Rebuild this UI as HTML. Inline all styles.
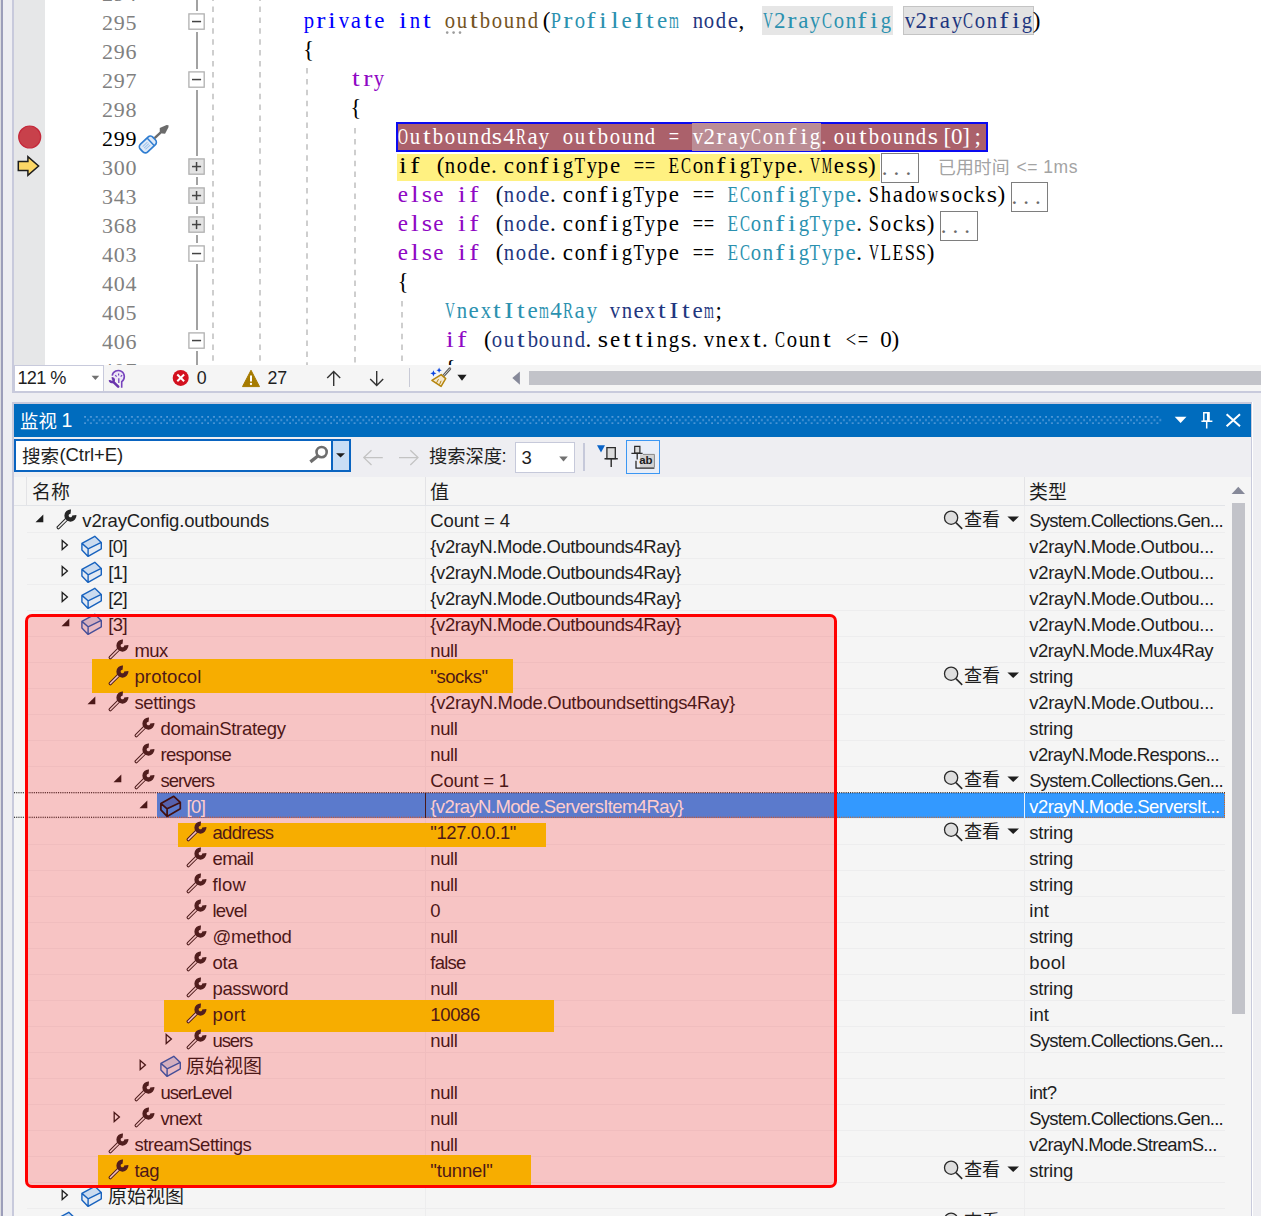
<!DOCTYPE html>
<html><head><meta charset="utf-8"><title>Watch</title><style>
html,body{margin:0;padding:0}
body{width:1261px;height:1216px;overflow:hidden;position:relative;background:#fff;font-family:"Liberation Sans",sans-serif}
#root{position:absolute;left:0;top:0;width:1261px;height:1216px;overflow:hidden}
#root div,#root svg{position:absolute;display:block}
#root span{position:static}
.ui{font-family:"Liberation Sans",sans-serif;white-space:pre}
.t{font-size:18.500px;line-height:26px;height:26px;margin-top:1.300px}
.cl{font-family:"Liberation Serif",serif;font-size:23px;line-height:29px;height:29px;white-space:pre;margin-top:-1.300px}
.ln{font-family:"Liberation Serif",serif;font-size:22px;line-height:29px;height:29px;left:101.600px;white-space:pre;margin-top:1.100px}
#root .sc i{position:static}
.sc i{display:inline-flex;justify-content:center;width:11.79px;font-style:normal;white-space:pre}.q10{transform:scaleX(0.50)}.q11{transform:scaleX(0.55)}.q12{transform:scaleX(0.60)}.q13{transform:scaleX(0.65)}.q14{transform:scaleX(0.70)}.q15{transform:scaleX(0.75)}.q16{transform:scaleX(0.80)}.q17{transform:scaleX(0.85)}.q18{transform:scaleX(0.90)}.q19{transform:scaleX(0.95)}.q21{transform:scaleX(1.05)}.q22{transform:scaleX(1.10)}.q23{transform:scaleX(1.15)}.q24{transform:scaleX(1.20)}.q25{transform:scaleX(1.25)}.q26{transform:scaleX(1.30)}.q27{transform:scaleX(1.35)}.pl{transform:translateX(-3.2px)}.pm{transform:translateX(-2.4px)}.pr{transform:translateX(2.4px)}
.cj{overflow:visible;font-family:"Liberation Sans","Noto Sans CJK SC",sans-serif}</style></head><body><div id="root">
<div style="left:0px;top:0px;width:1px;height:1216px;background:#dcdce0;"></div>
<div style="left:1px;top:0px;width:1.9px;height:1216px;background:#9c9eba;"></div>
<div style="left:2.9px;top:0px;width:9.4px;height:1216px;background:#eeeef2;"></div>
<div style="left:12.3px;top:0px;width:1.5px;height:392.5px;background:#c8cadc;"></div>
<div style="left:13.8px;top:364.8px;width:1248px;height:26.3px;background:#f5f5f5;"></div>
<div style="left:12.3px;top:391px;width:1249px;height:1.5px;background:#c8cadc;"></div>
<div style="left:2.9px;top:392.5px;width:1259px;height:9.5px;background:#eeeef2;"></div>
<div id="ed" style="left:0;top:0;width:1261px;height:364.8px;overflow:hidden">
<div style="left:13.8px;top:0px;width:30.9px;height:365px;background:#e6e7e8;"></div>
<div style="left:762.23px;top:6px;width:130.29px;height:28.6px;background:#e6e6e6;"></div>
<div style="left:903.01px;top:6px;width:131.19px;height:28.6px;background:#e2e2e2;box-sizing:border-box;border:1px solid #c4c4c4"></div>
<div style="left:395.64px;top:122px;width:592.1px;height:30px;background:#ab616b;box-sizing:border-box;border:2px solid #0a0af0"></div>
<div style="left:691.79px;top:123.3px;width:129.69px;height:27.4px;background:#bb8d95;"></div>
<div style="left:396.64px;top:153.5px;width:483.79px;height:27px;background:#fff181;"></div>
<svg style="left:211.1px;top:0px" width="4" height="365"><line x1="2" y1="-4.4" x2="2" y2="400" stroke="#c6c6c6" stroke-width="1.7" stroke-dasharray="5.5 5.4"/></svg>
<svg style="left:258.2px;top:0px" width="4" height="365"><line x1="2" y1="-4.4" x2="2" y2="400" stroke="#c6c6c6" stroke-width="1.7" stroke-dasharray="5.5 5.4"/></svg>
<svg style="left:305.3px;top:68.4px" width="4" height="296.6"><line x1="2" y1="0" x2="2" y2="400" stroke="#c6c6c6" stroke-width="1.7" stroke-dasharray="5.5 5.4"/></svg>
<svg style="left:352.6px;top:127.6px" width="4" height="237.4"><line x1="2" y1="0" x2="2" y2="400" stroke="#c6c6c6" stroke-width="1.7" stroke-dasharray="5.5 5.4"/></svg>
<svg style="left:399.9px;top:301px" width="4" height="64"><line x1="2" y1="0" x2="2" y2="400" stroke="#c6c6c6" stroke-width="1.7" stroke-dasharray="5.5 5.4"/></svg>
<div style="left:196.2px;top:0px;width:1.6px;height:365px;background:#a2a2a2;"></div>
<svg style="left:185.9px;top:11.3px" width="21" height="21" viewBox="-2.3 -2.3 21 21"><rect x="-2.3" y="-2.3" width="21" height="21" fill="#fff"/><rect x="0.6" y="0.6" width="15.3" height="15.3" fill="#fff" stroke="#b0b0b0" stroke-width="1.3"/><path d="M3.7 8.25h9.1" stroke="#444" stroke-width="1.5"/></svg>
<svg style="left:185.9px;top:69.3px" width="21" height="21" viewBox="-2.3 -2.3 21 21"><rect x="-2.3" y="-2.3" width="21" height="21" fill="#fff"/><rect x="0.6" y="0.6" width="15.3" height="15.3" fill="#fff" stroke="#b0b0b0" stroke-width="1.3"/><path d="M3.7 8.25h9.1" stroke="#444" stroke-width="1.5"/></svg>
<svg style="left:185.9px;top:156.3px" width="21" height="21" viewBox="-2.3 -2.3 21 21"><rect x="-2.3" y="-2.3" width="21" height="21" fill="#fff"/><rect x="0.6" y="0.6" width="15.3" height="15.3" fill="#e3e3e3" stroke="#b0b0b0" stroke-width="1.3"/><path d="M3.7 8.25h9.1" stroke="#444" stroke-width="1.5"/><path d="M8.25 3.7v9.1" stroke="#444" stroke-width="1.5"/></svg>
<svg style="left:185.9px;top:185.3px" width="21" height="21" viewBox="-2.3 -2.3 21 21"><rect x="-2.3" y="-2.3" width="21" height="21" fill="#fff"/><rect x="0.6" y="0.6" width="15.3" height="15.3" fill="#e3e3e3" stroke="#b0b0b0" stroke-width="1.3"/><path d="M3.7 8.25h9.1" stroke="#444" stroke-width="1.5"/><path d="M8.25 3.7v9.1" stroke="#444" stroke-width="1.5"/></svg>
<svg style="left:185.9px;top:214.3px" width="21" height="21" viewBox="-2.3 -2.3 21 21"><rect x="-2.3" y="-2.3" width="21" height="21" fill="#fff"/><rect x="0.6" y="0.6" width="15.3" height="15.3" fill="#e3e3e3" stroke="#b0b0b0" stroke-width="1.3"/><path d="M3.7 8.25h9.1" stroke="#444" stroke-width="1.5"/><path d="M8.25 3.7v9.1" stroke="#444" stroke-width="1.5"/></svg>
<svg style="left:185.9px;top:243.3px" width="21" height="21" viewBox="-2.3 -2.3 21 21"><rect x="-2.3" y="-2.3" width="21" height="21" fill="#fff"/><rect x="0.6" y="0.6" width="15.3" height="15.3" fill="#fff" stroke="#b0b0b0" stroke-width="1.3"/><path d="M3.7 8.25h9.1" stroke="#444" stroke-width="1.5"/></svg>
<svg style="left:185.9px;top:330.3px" width="21" height="21" viewBox="-2.3 -2.3 21 21"><rect x="-2.3" y="-2.3" width="21" height="21" fill="#fff"/><rect x="0.6" y="0.6" width="15.3" height="15.3" fill="#fff" stroke="#b0b0b0" stroke-width="1.3"/><path d="M3.7 8.25h9.1" stroke="#444" stroke-width="1.5"/></svg>
<div class="ln sc" style="top:-22px;color:#808080"><i>2</i><i>9</i><i>4</i></div>
<div class="ln sc" style="top:7px;color:#808080"><i>2</i><i>9</i><i>5</i></div>
<div class="ln sc" style="top:36px;color:#808080"><i>2</i><i>9</i><i>6</i></div>
<div class="ln sc" style="top:65px;color:#808080"><i>2</i><i>9</i><i>7</i></div>
<div class="ln sc" style="top:94px;color:#808080"><i>2</i><i>9</i><i>8</i></div>
<div class="ln sc" style="top:123px;color:#000"><i>2</i><i>9</i><i>9</i></div>
<div class="ln sc" style="top:152px;color:#808080"><i>3</i><i>0</i><i>0</i></div>
<div class="ln sc" style="top:181px;color:#808080"><i>3</i><i>4</i><i>3</i></div>
<div class="ln sc" style="top:210px;color:#808080"><i>3</i><i>6</i><i>8</i></div>
<div class="ln sc" style="top:239px;color:#808080"><i>4</i><i>0</i><i>3</i></div>
<div class="ln sc" style="top:268px;color:#808080"><i>4</i><i>0</i><i>4</i></div>
<div class="ln sc" style="top:297px;color:#808080"><i>4</i><i>0</i><i>5</i></div>
<div class="ln sc" style="top:326px;color:#808080"><i>4</i><i>0</i><i>6</i></div>
<div class="ln sc" style="top:355px;color:#808080"><i>4</i><i>0</i><i>7</i></div>
<div class="cl sc" style="left:302.72px;top:7px"><span style="color:#0000ff"><i class="q18">p</i><i class="q24">r</i><i class="q24">i</i><i class="q18">v</i><i>a</i><i class="q24">t</i><i>e</i><i> </i><i class="q24">i</i><i class="q18">n</i><i class="q24">t</i><i> </i></span><span style="color:#74531f"><i class="q18">o</i><i class="q18">u</i><i class="q24">t</i><i class="q18">b</i><i class="q18">o</i><i class="q18">u</i><i class="q18">n</i><i class="q18">d</i></span><span style="color:#000"><i class="pr">(</i></span><span style="color:#2b91af"><i class="q16">P</i><i class="q24">r</i><i class="q18">o</i><i class="q24">f</i><i class="q24">i</i><i class="q24">l</i><i>e</i><i class="q24">I</i><i class="q24">t</i><i>e</i><i class="q11">m</i></span><span style="color:#000"><i> </i></span><span style="color:#1f377f"><i class="q18">n</i><i class="q18">o</i><i class="q18">d</i><i>e</i></span><span style="color:#000"><i class="pl">,</i><i> </i></span><span style="color:#2b91af"><i class="q12">V</i><i>2</i><i class="q24">r</i><i>a</i><i class="q18">y</i><i class="q13">C</i><i class="q18">o</i><i class="q18">n</i><i class="q24">f</i><i class="q24">i</i><i class="q18">g</i></span><span style="color:#000"><i> </i></span><span style="color:#1f377f"><i class="q18">v</i><i>2</i><i class="q24">r</i><i>a</i><i class="q18">y</i><i class="q13">C</i><i class="q18">o</i><i class="q18">n</i><i class="q24">f</i><i class="q24">i</i><i class="q18">g</i></span><span style="color:#000"><i class="pm">)</i></span></div>
<div class="cl sc" style="left:302.72px;top:36px"><span style="color:#000"><i>{</i></span></div>
<div class="cl sc" style="left:349.88px;top:65px"><span style="color:#8f08c4"><i class="q24">t</i><i class="q24">r</i><i class="q18">y</i></span></div>
<div class="cl sc" style="left:349.88px;top:94px"><span style="color:#000"><i>{</i></span></div>
<div class="cl sc" style="left:397.04px;top:123px"><span style="color:#fff"><i class="q12">O</i><i class="q18">u</i><i class="q24">t</i><i class="q18">b</i><i class="q18">o</i><i class="q18">u</i><i class="q18">n</i><i class="q18">d</i><i class="q23">s</i><i>4</i><i class="q13">R</i><i>a</i><i class="q18">y</i><i> </i><i class="q18">o</i><i class="q18">u</i><i class="q24">t</i><i class="q18">b</i><i class="q18">o</i><i class="q18">u</i><i class="q18">n</i><i class="q18">d</i><i> </i><i class="q16">=</i><i> </i><i class="q18">v</i><i>2</i><i class="q24">r</i><i>a</i><i class="q18">y</i><i class="q13">C</i><i class="q18">o</i><i class="q18">n</i><i class="q24">f</i><i class="q24">i</i><i class="q18">g</i><i class="pl">.</i><i class="q18">o</i><i class="q18">u</i><i class="q24">t</i><i class="q18">b</i><i class="q18">o</i><i class="q18">u</i><i class="q18">n</i><i class="q18">d</i><i class="q23">s</i><i class="pr">[</i><i>0</i><i class="pm">]</i><i class="pm">;</i></span></div>
<div class="cl sc" style="left:397.04px;top:152px"><span style="color:#000"><i class="q24">i</i><i class="q24">f</i><i> </i><i class="pr">(</i><i class="q18">n</i><i class="q18">o</i><i class="q18">d</i><i>e</i><i class="pl">.</i><i>c</i><i class="q18">o</i><i class="q18">n</i><i class="q24">f</i><i class="q24">i</i><i class="q18">g</i><i class="q15">T</i><i class="q18">y</i><i class="q18">p</i><i>e</i><i> </i><i class="q16">=</i><i class="q16">=</i><i> </i><i class="q15">E</i><i class="q13">C</i><i class="q18">o</i><i class="q18">n</i><i class="q24">f</i><i class="q24">i</i><i class="q18">g</i><i class="q15">T</i><i class="q18">y</i><i class="q18">p</i><i>e</i><i class="pl">.</i><i class="q12">V</i><i class="q10">M</i><i>e</i><i class="q23">s</i><i class="q23">s</i><i class="pm">)</i></span></div>
<div class="cl sc" style="left:397.04px;top:181px"><span style="color:#8f08c4"><i>e</i><i class="q24">l</i><i class="q23">s</i><i>e</i><i> </i><i class="q24">i</i><i class="q24">f</i></span><span style="color:#000"><i> </i><i class="pr">(</i></span><span style="color:#1f377f"><i class="q18">n</i><i class="q18">o</i><i class="q18">d</i><i>e</i></span><span style="color:#000"><i class="pl">.</i><i>c</i><i class="q18">o</i><i class="q18">n</i><i class="q24">f</i><i class="q24">i</i><i class="q18">g</i><i class="q15">T</i><i class="q18">y</i><i class="q18">p</i><i>e</i><i> </i><i class="q16">=</i><i class="q16">=</i><i> </i></span><span style="color:#2b91af"><i class="q15">E</i><i class="q13">C</i><i class="q18">o</i><i class="q18">n</i><i class="q24">f</i><i class="q24">i</i><i class="q18">g</i><i class="q15">T</i><i class="q18">y</i><i class="q18">p</i><i>e</i></span><span style="color:#000"><i class="pl">.</i><i class="q16">S</i><i class="q18">h</i><i>a</i><i class="q18">d</i><i class="q18">o</i><i class="q12">w</i><i class="q23">s</i><i class="q18">o</i><i>c</i><i class="q18">k</i><i class="q23">s</i><i class="pm">)</i></span></div>
<div class="cl sc" style="left:397.04px;top:210px"><span style="color:#8f08c4"><i>e</i><i class="q24">l</i><i class="q23">s</i><i>e</i><i> </i><i class="q24">i</i><i class="q24">f</i></span><span style="color:#000"><i> </i><i class="pr">(</i></span><span style="color:#1f377f"><i class="q18">n</i><i class="q18">o</i><i class="q18">d</i><i>e</i></span><span style="color:#000"><i class="pl">.</i><i>c</i><i class="q18">o</i><i class="q18">n</i><i class="q24">f</i><i class="q24">i</i><i class="q18">g</i><i class="q15">T</i><i class="q18">y</i><i class="q18">p</i><i>e</i><i> </i><i class="q16">=</i><i class="q16">=</i><i> </i></span><span style="color:#2b91af"><i class="q15">E</i><i class="q13">C</i><i class="q18">o</i><i class="q18">n</i><i class="q24">f</i><i class="q24">i</i><i class="q18">g</i><i class="q15">T</i><i class="q18">y</i><i class="q18">p</i><i>e</i></span><span style="color:#000"><i class="pl">.</i><i class="q16">S</i><i class="q18">o</i><i>c</i><i class="q18">k</i><i class="q23">s</i><i class="pm">)</i></span></div>
<div class="cl sc" style="left:397.04px;top:239px"><span style="color:#8f08c4"><i>e</i><i class="q24">l</i><i class="q23">s</i><i>e</i><i> </i><i class="q24">i</i><i class="q24">f</i></span><span style="color:#000"><i> </i><i class="pr">(</i></span><span style="color:#1f377f"><i class="q18">n</i><i class="q18">o</i><i class="q18">d</i><i>e</i></span><span style="color:#000"><i class="pl">.</i><i>c</i><i class="q18">o</i><i class="q18">n</i><i class="q24">f</i><i class="q24">i</i><i class="q18">g</i><i class="q15">T</i><i class="q18">y</i><i class="q18">p</i><i>e</i><i> </i><i class="q16">=</i><i class="q16">=</i><i> </i></span><span style="color:#2b91af"><i class="q15">E</i><i class="q13">C</i><i class="q18">o</i><i class="q18">n</i><i class="q24">f</i><i class="q24">i</i><i class="q18">g</i><i class="q15">T</i><i class="q18">y</i><i class="q18">p</i><i>e</i></span><span style="color:#000"><i class="pl">.</i><i class="q12">V</i><i class="q15">L</i><i class="q15">E</i><i class="q16">S</i><i class="q16">S</i><i class="pm">)</i></span></div>
<div class="cl sc" style="left:397.04px;top:268px"><span style="color:#000"><i>{</i></span></div>
<div class="cl sc" style="left:444.2px;top:297px"><span style="color:#2b91af"><i class="q12">V</i><i class="q18">n</i><i>e</i><i class="q18">x</i><i class="q24">t</i><i class="q24">I</i><i class="q24">t</i><i>e</i><i class="q11">m</i><i>4</i><i class="q13">R</i><i>a</i><i class="q18">y</i></span><span style="color:#000"><i> </i></span><span style="color:#1f377f"><i class="q18">v</i><i class="q18">n</i><i>e</i><i class="q18">x</i><i class="q24">t</i><i class="q24">I</i><i class="q24">t</i><i>e</i><i class="q11">m</i></span><span style="color:#000"><i class="pm">;</i></span></div>
<div class="cl sc" style="left:444.2px;top:326px"><span style="color:#8f08c4"><i class="q24">i</i><i class="q24">f</i></span><span style="color:#000"><i> </i><i class="pr">(</i></span><span style="color:#1f377f"><i class="q18">o</i><i class="q18">u</i><i class="q24">t</i><i class="q18">b</i><i class="q18">o</i><i class="q18">u</i><i class="q18">n</i><i class="q18">d</i></span><span style="color:#000"><i class="pl">.</i><i class="q23">s</i><i>e</i><i class="q24">t</i><i class="q24">t</i><i class="q24">i</i><i class="q18">n</i><i class="q18">g</i><i class="q23">s</i><i class="pl">.</i><i class="q18">v</i><i class="q18">n</i><i>e</i><i class="q18">x</i><i class="q24">t</i><i class="pl">.</i><i class="q13">C</i><i class="q18">o</i><i class="q18">u</i><i class="q18">n</i><i class="q24">t</i><i> </i><i class="q16">&lt;</i><i class="q16">=</i><i> </i><i>0</i><i class="pm">)</i></span></div>
<div class="cl sc" style="left:444.2px;top:355px"><span style="color:#000"><i>{</i></span></div>
<svg style="left:445.2px;top:30.8px" width="20" height="4"><circle cx="2.2" cy="1.6" r="1.3" fill="#9c9c9c"/><circle cx="8.6" cy="1.6" r="1.3" fill="#9c9c9c"/><circle cx="15" cy="1.6" r="1.3" fill="#9c9c9c"/></svg>
<div class="cl" style="left:880.83px;top:154.6px;width:37.77px;height:29.3px;box-sizing:border-box;border:1.6px solid #7e7e7e;background:#fff;color:#6a6a6a"><span class="sc" style="position:relative;left:0.2px;top:-1.2px"><i class="pl">.</i><i class="pl">.</i><i class="pl">.</i></span></div>
<div class="cl" style="left:1010.52px;top:183.6px;width:37.77px;height:29.3px;box-sizing:border-box;border:1.6px solid #7e7e7e;background:#fff;color:#6a6a6a"><span class="sc" style="position:relative;left:0.2px;top:-1.2px"><i class="pl">.</i><i class="pl">.</i><i class="pl">.</i></span></div>
<div class="cl" style="left:939.78px;top:212.6px;width:37.77px;height:29.3px;box-sizing:border-box;border:1.6px solid #7e7e7e;background:#fff;color:#6a6a6a"><span class="sc" style="position:relative;left:0.2px;top:-1.2px"><i class="pl">.</i><i class="pl">.</i><i class="pl">.</i></span></div>
<svg class="cj" style="left:938.3px;top:158.2px" width="71.9" height="18.2"><text x="0" y="16" font-size="17.9" fill="#a3a3a3">已用时间</text></svg>
<div class="ui" style="left:1016.5px;top:157.3px;font-size:17.5px;color:#a3a3a3;letter-spacing:0.521px">&lt;= 1ms</div>
<svg style="left:17px;top:124px" width="26" height="26"><circle cx="12.7" cy="13" r="11" fill="#c8414b" stroke="#c5283a" stroke-width="1.2"/></svg>
<svg style="left:16px;top:154px" width="26" height="24" viewBox="0 0 26 24"><path d="M2.3 7.6h9.6V2.6l10.7 9.4-10.7 9.4v-5H2.3z" fill="#fcd766" stroke="#1e1e1e" stroke-width="1.5" stroke-linejoin="miter"/></svg>
<svg style="left:136px;top:122px" width="34" height="33" viewBox="136 122 34 33"><g transform="rotate(-43 148 144.2)"><rect x="139" y="139" width="17.4" height="10.6" rx="3.6" fill="#dfeaf8" stroke="#2f7dd1" stroke-width="1.7"/><path d="M151.6 139.3v10" stroke="#2f7dd1" stroke-width="1.5"/><path d="M142.5 142.3h6.5M142.5 144.3h6.5M142.5 146.3h6.5" stroke="#9cc2ec" stroke-width="1"/><path d="M157 144.3h8" stroke="#6b6b6b" stroke-width="2.4"/><path d="M164 144.3l3.6-3.9 7 2.5 1.3 1.4-1.3 1.4-7 2.5z" fill="#6b6b6b"/></g></svg>
</div>
<div style="left:13.8px;top:364.8px;width:90px;height:27.7px;background:#fff;box-sizing:border-box;border:1.4px solid #c8cadc"></div>
<div class="ui" style="left:17.4px;top:364.8px;font-size:18.2px;line-height:26px;color:#1e1e1e;letter-spacing:-0.656px">121 %</div>
<svg style="left:91px;top:375px" width="9" height="6"><path d="M0.6 0.8h7.6l-3.8 4.2z" fill="#717171"/></svg>
<svg style="left:107px;top:367px" width="21" height="23" viewBox="107 367 21 23"><circle cx="119" cy="375.4" r="5.6" fill="#ece6f6"/><path d="M112.2 375.6A6.1 6.1 0 1 1 121.700 381.600V387.800" fill="none" stroke="#7642bd" stroke-width="1.600"/><path d="M115.300 375.100l1.300 1.500M118.600 373.600v1.900M122.100 375.100l-1.400 1.500" stroke="#7642bd" stroke-width="1.200"/><path d="M118.800 378.200v4.900" stroke="#7642bd" stroke-width="1.300"/><path d="M111.730 378.310A1.900 1.900 0 1 1 110 380.030" fill="none" stroke="#6a35ac" stroke-width="2.500"/><path d="M113.300 381.800l4.900 4.900" stroke="#6a35ac" stroke-width="2.600" stroke-linecap="round"/></svg>
<svg style="left:172px;top:369px" width="18" height="18" viewBox="0 0 18 18"><circle cx="8.7" cy="8.9" r="8" fill="#d3111f"/><path d="M5.300 5.500l6.800 6.800M12.100 5.500l-6.800 6.800" stroke="#fff" stroke-width="2"/></svg>
<div class="ui" style="left:196.7px;top:364.800px;font-size:17.8px;line-height:26px;color:#1e1e1e">0</div>
<svg style="left:241px;top:369px" width="20" height="19" viewBox="0 0 20 19"><path d="M10 1.200l8.500 16.400h-17z" fill="#a67b00" stroke="#a67b00" stroke-width="1" stroke-linejoin="round"/><path d="M10 6.500v6" stroke="#fff" stroke-width="2"/><circle cx="10" cy="15" r="1.150" fill="#fff"/></svg>
<div class="ui" style="left:267.6px;top:364.800px;font-size:17.8px;line-height:26px;color:#1e1e1e;letter-spacing:-0.191px">27</div>
<svg style="left:325px;top:369px" width="18" height="19" viewBox="0 0 18 19"><path d="M8.700 17V2.800M2.200 9l6.500-6.500 6.500 6.500" fill="none" stroke="#333" stroke-width="1.400"/></svg>
<svg style="left:368.400px;top:369px" width="18" height="19" viewBox="0 0 18 19"><path d="M8.700 2v14.200M2.200 10l6.500 6.500 6.500-6.500" fill="none" stroke="#333" stroke-width="1.400"/></svg>
<div style="left:408.8px;top:367.7px;width:1.4px;height:19.7px;background:#c8cad6;"></div>
<svg style="left:430px;top:366px" width="23" height="23" viewBox="430 366 23 23"><path d="M442.800 376.600l7-7.800" stroke="#5c5c5c" stroke-width="2.800" stroke-linecap="round"/><path d="M442.800 376.600l7-7.800" stroke="#cfcfcf" stroke-width="1" stroke-linecap="round"/><path d="M441.200 374.600l4.500 4-4.600 7.800-9.200-6z" fill="#f4e7cf" stroke="#b5850d" stroke-width="1.500" stroke-linejoin="round"/><path d="M436.500 382.800l2-3.600M439.500 384.600l1.600-3.800" stroke="#b5850d" stroke-width="1"/><path d="M433.400 370.200l.9 2.200 2.200.9-2.200.9-.9 2.200-.9-2.200-2.200-.9 2.200-.9zM439.100 367.600l.8 1.900 1.900.8-1.900.8-.8 1.900-.8-1.900-1.900-.8 1.900-.8z" fill="#0b45e0"/></svg>
<svg style="left:457px;top:374px" width="10" height="7"><path d="M0.400 0.700h9.200l-4.600 6.100z" fill="#1e1e1e"/></svg>
<svg style="left:512px;top:371px" width="9" height="14"><path d="M7.900 0.500v13.300L0.300 7.100z" fill="#868999"/></svg>
<div style="left:529.2px;top:371.1px;width:740px;height:13.7px;background:#c2c3c9;"></div>
<div style="left:12.3px;top:402px;width:1240.2px;height:820px;background:#c8cadc;"></div>
<div style="left:13.8px;top:403.8px;width:1237.2px;height:820px;background:#f5f5f5;"></div>
<div style="left:1252.5px;top:402px;width:10px;height:820px;background:#eeeef2;"></div>
<div style="left:13.8px;top:403.8px;width:1237.2px;height:32.8px;background:#006cbe;"></div>
<svg class="cj" style="left:20px;top:411px" width="37.8" height="19.4"><text x="0" y="17" font-size="18.4" fill="#fff">监视</text></svg>
<div class="ui" style="left:61.6px;top:407.400px;font-size:19.5px;line-height:26px;color:#fff">1</div>
<svg style="left:84px;top:415.800px" width="1078.400" height="8.200"><defs><pattern id="grip" width="5.860" height="6.400" patternUnits="userSpaceOnUse"><rect x="0.200" y="0" width="1.700" height="1.700" fill="#5d9fdb"/><rect x="3.100" y="3.200" width="1.700" height="1.700" fill="#5d9fdb"/></pattern></defs><rect width="1078.400" height="8.200" fill="url(#grip)"/></svg>
<svg style="left:1174px;top:416px" width="14" height="8"><path d="M0.700 0.700h11.800l-5.900 6.300z" fill="#fff"/></svg>
<svg style="left:1200px;top:411px" width="14" height="19" viewBox="0 0 14 19"><path d="M3.800 1.700h5.200v8.300h-5.200zM1.400 10.200h11M6.700 10.200v7.400" fill="none" stroke="#fff" stroke-width="1.500"/><path d="M8.100 1.700v8.300" stroke="#fff" stroke-width="2.200"/></svg>
<svg style="left:1225px;top:413px" width="17" height="15" viewBox="0 0 17 15"><path d="M1.600 1.300l13.400 12M15 1.300l-13.400 12" stroke="#fff" stroke-width="2"/></svg>
<div style="left:13.8px;top:436.6px;width:1237.2px;height:40px;background:#eeeef2;"></div>
<div style="left:14.2px;top:439.1px;width:336.6px;height:32.6px;background:#fff;box-sizing:border-box;border:2.200px solid #0a64c0"></div>
<div style="left:332.9px;top:440.9px;width:16.1px;height:29px;background:#c9def5;"></div>
<div style="left:331.1px;top:439.1px;width:1.8px;height:32.6px;background:#0a64c0;"></div>
<svg class="cj" style="left:21.8px;top:446.2px" width="37.6" height="19"><text x="0" y="16.7" font-size="18.6" fill="#1e1e1e">搜索</text></svg>
<div class="ui" style="left:59.500px;top:442.200px;font-size:18.5px;line-height:26px;color:#1e1e1e;letter-spacing:-0.094px">(Ctrl+E)</div>
<svg style="left:307px;top:444px" width="22" height="21" viewBox="307 444 22 21"><circle cx="321.600" cy="452.100" r="5.100" fill="none" stroke="#6e6e6e" stroke-width="2.600"/><path d="M317.800 456l-7.400 5.900" stroke="#6e6e6e" stroke-width="3.300"/></svg>
<svg style="left:336px;top:453px" width="10" height="5"><path d="M0.100 0.200h8.900l-4.450 4.200z" fill="#1e1e1e"/></svg>
<svg style="left:362px;top:449px" width="22" height="18" viewBox="0 0 22 18"><path d="M1.800 8.600h19M9.500 1.200L1.800 8.600l7.700 7.400" fill="none" stroke="#c3c3c3" stroke-width="1.300"/></svg>
<svg style="left:398px;top:449px" width="22" height="18" viewBox="0 0 22 18"><path d="M1 8.600h19M12.300 1.200L20 8.600l-7.700 7.400" fill="none" stroke="#c3c3c3" stroke-width="1.300"/></svg>
<svg class="cj" style="left:428.5px;top:447.3px" width="73.5" height="18.6"><text x="0" y="16.4" font-size="18.3" fill="#1e1e1e">搜索深度</text></svg>
<div class="ui" style="left:501.500px;top:443.400px;font-size:18.5px;line-height:26px;color:#1e1e1e">:</div>
<div style="left:515px;top:442px;width:60px;height:30.8px;background:#fff;box-sizing:border-box;border:1.600px solid #c6c9da"></div>
<div class="ui" style="left:521.500px;top:444.600px;font-size:18.5px;line-height:26px;color:#1e1e1e">3</div>
<svg style="left:559px;top:455.500px" width="10" height="6"><path d="M0.200 0.500h8.600l-4.300 5z" fill="#717171"/></svg>
<div style="left:583.4px;top:443px;width:1.7px;height:27.5px;background:#c6c9da;"></div>
<svg style="left:596px;top:444px" width="24" height="24" viewBox="596 444 24 24"><path d="M597 445.300h8l-4 7.100z" fill="#0a64c8"/><path d="M606.900 447.600h8.400v11h-8.400z" fill="#dcdcdc" stroke="#2b2b2b" stroke-width="1.300"/><path d="M604.500 458.800h13.300M611.200 458.800v8.200" stroke="#2b2b2b" stroke-width="1.400"/></svg>
<div style="left:625.9px;top:440.3px;width:34px;height:33.5px;background:#e9eef7;box-sizing:border-box;border:1.600px solid #3b97f3"></div>
<svg style="left:629px;top:443px" width="28" height="28" viewBox="629 443 28 28"><path d="M634.700 446.300h5.200v6.700h-5.200z" fill="#dcdcdc" stroke="#2b2b2b" stroke-width="1.200"/><path d="M631.400 453.400h11.200M637.200 453.400v6.200" stroke="#2b2b2b" stroke-width="1.300"/><rect x="640" y="454.300" width="14.400" height="13.800" fill="#d3d3d3"/><path d="M636 460.800v7.400h18.400" fill="none" stroke="#2b2b2b" stroke-width="1.300"/><path d="M643 454.400h11.400v13" fill="none" stroke="#8a8a8a" stroke-width="1"/></svg>
<div class="ui" style="left:639.300px;top:453.200px;font-size:11.500px;line-height:14px;font-weight:bold;color:#1e1e1e;letter-spacing:-0.3px">ab</div>
<div style="left:13.8px;top:505px;width:1211.2px;height:1px;background:#e2e4e8;"></div>
<div style="left:25.7px;top:476.6px;width:1px;height:28.6px;background:#e3e3e6;"></div>
<div style="left:424.5px;top:476.6px;width:1px;height:28.6px;background:#e3e3e6;"></div>
<div style="left:1023.8px;top:476.6px;width:1px;height:28.6px;background:#e3e3e6;"></div>
<svg class="cj" style="left:31.6px;top:482px" width="37.9" height="19"><text x="0" y="16.7" font-size="18.9" fill="#1e1e1e">名称</text></svg>
<svg class="cj" style="left:430.3px;top:482px" width="19" height="19"><text x="0" y="16.7" font-size="19" fill="#1e1e1e">值</text></svg>
<svg class="cj" style="left:1029.2px;top:482px" width="37.9" height="19"><text x="0" y="16.7" font-size="18.9" fill="#1e1e1e">类型</text></svg>
<svg style="left:1231px;top:486px" width="15" height="9"><path d="M0.600 8.100h13.400L7.300 0.700z" fill="#868999"/></svg>
<div style="left:1232.2px;top:502.8px;width:12.6px;height:511.5px;background:#c2c3c9;"></div>
<div style="left:26.7px;top:532.2px;width:1198.3px;height:1px;background:#ededee;"></div>
<div style="left:26.7px;top:558.2px;width:1198.3px;height:1px;background:#ededee;"></div>
<div style="left:26.7px;top:584.2px;width:1198.3px;height:1px;background:#ededee;"></div>
<div style="left:26.7px;top:610.2px;width:1198.3px;height:1px;background:#ededee;"></div>
<div style="left:26.7px;top:636.2px;width:1198.3px;height:1px;background:#ededee;"></div>
<div style="left:26.7px;top:662.2px;width:1198.3px;height:1px;background:#ededee;"></div>
<div style="left:26.7px;top:688.2px;width:1198.3px;height:1px;background:#ededee;"></div>
<div style="left:26.7px;top:714.2px;width:1198.3px;height:1px;background:#ededee;"></div>
<div style="left:26.7px;top:740.2px;width:1198.3px;height:1px;background:#ededee;"></div>
<div style="left:26.7px;top:766.2px;width:1198.3px;height:1px;background:#ededee;"></div>
<div style="left:26.7px;top:792.2px;width:1198.3px;height:1px;background:#ededee;"></div>
<div style="left:26.7px;top:818.2px;width:1198.3px;height:1px;background:#ededee;"></div>
<div style="left:26.7px;top:844.2px;width:1198.3px;height:1px;background:#ededee;"></div>
<div style="left:26.7px;top:870.2px;width:1198.3px;height:1px;background:#ededee;"></div>
<div style="left:26.7px;top:896.2px;width:1198.3px;height:1px;background:#ededee;"></div>
<div style="left:26.7px;top:922.2px;width:1198.3px;height:1px;background:#ededee;"></div>
<div style="left:26.7px;top:948.2px;width:1198.3px;height:1px;background:#ededee;"></div>
<div style="left:26.7px;top:974.2px;width:1198.3px;height:1px;background:#ededee;"></div>
<div style="left:26.7px;top:1000.2px;width:1198.3px;height:1px;background:#ededee;"></div>
<div style="left:26.7px;top:1026.2px;width:1198.3px;height:1px;background:#ededee;"></div>
<div style="left:26.7px;top:1052.2px;width:1198.3px;height:1px;background:#ededee;"></div>
<div style="left:26.7px;top:1078.2px;width:1198.3px;height:1px;background:#ededee;"></div>
<div style="left:26.7px;top:1104.2px;width:1198.3px;height:1px;background:#ededee;"></div>
<div style="left:26.7px;top:1130.2px;width:1198.3px;height:1px;background:#ededee;"></div>
<div style="left:26.7px;top:1156.2px;width:1198.3px;height:1px;background:#ededee;"></div>
<div style="left:26.7px;top:1182.2px;width:1198.3px;height:1px;background:#ededee;"></div>
<div style="left:26.7px;top:1208.2px;width:1198.3px;height:1px;background:#ededee;"></div>
<div style="left:26.7px;top:1234.2px;width:1198.3px;height:1px;background:#ededee;"></div>
<div style="left:424.5px;top:506px;width:1px;height:712px;background:#ededee;"></div>
<div style="left:1023.8px;top:506px;width:1px;height:712px;background:#ededee;"></div>
<div style="left:156.7px;top:793px;width:1068px;height:24.5px;background:#3399ff;"></div>
<svg style="left:13.800px;top:792px" width="1211.200" height="26.500"><path d="M0 0.700H1211.200M0 25.300H143" stroke="#000" stroke-width="1.100" stroke-dasharray="1.100 1.100"/><path d="M143 25.300H1211.200" stroke="#e85e00" stroke-width="1.100" stroke-dasharray="1.100 1.100"/><path d="M1210.600 1V25" stroke="#e85e00" stroke-width="1.100" stroke-dasharray="1.100 1.100"/></svg>
<div style="left:424.5px;top:793px;width:1.2px;height:24.5px;background:#1e1e1e;"></div>
<div style="left:1023.8px;top:793px;width:1.2px;height:24.5px;background:#e8f1fb;"></div>
<div style="left:92px;top:659px;width:421px;height:33.6px;background:#f6d900;"></div>
<div style="left:178px;top:823.2px;width:368px;height:24.2px;background:#f6d900;"></div>
<div style="left:164px;top:1000.3px;width:390px;height:32.2px;background:#f6d900;"></div>
<div style="left:98px;top:1155.1px;width:433px;height:30.9px;background:#f6d900;"></div>
<svg style="left:35px;top:513.5px" width="9" height="9"><path d="M8.300 0.500v7.800H0.500z" fill="#1e1e1e"/></svg>
<svg style="left:54.8px;top:508.7px" width="23" height="23" viewBox="0 0 23 23"><path d="M12.300 9.600L3.300 18.600" stroke="#262626" stroke-width="3.500" stroke-linecap="round"/><path d="M11.800 10.100L3.400 18.500" stroke="#f2f2f2" stroke-width="1.500" stroke-linecap="round"/><path d="M19.300 6.200A3.900 3.900 0 1 1 15.800 2.700" fill="none" stroke="#262626" stroke-width="4.300"/></svg>
<div class="ui t" style="left:82.3px;top:507px;color:#1e1e1e;letter-spacing:-0.161px">v2rayConfig.outbounds</div>
<div class="ui t" style="left:430.3px;top:507px;color:#1e1e1e;letter-spacing:-0.128px">Count = 4</div>
<div class="ui t" style="left:1029.3px;top:507px;color:#1e1e1e;letter-spacing:-0.77px">System.Collections.Gen...</div>
<svg style="left:942px;top:509px" width="22" height="22" viewBox="0 0 22 22"><circle cx="9.100" cy="8.700" r="6.600" fill="#dedede" stroke="#2b2b2b" stroke-width="1.300"/><path d="M13.900 13.600l6.300 6.300" stroke="#2b2b2b" stroke-width="1.600"/></svg><svg class="cj" style="left:963.5px;top:510.2px" width="36.4" height="18.3"><text x="0" y="16.1" font-size="18.1" fill="#1e1e1e">查看</text></svg><svg style="left:1007px;top:516px" width="13" height="7"><path d="M0.400 0.500h11.600l-5.800 5.500z" fill="#1e1e1e"/></svg>
<svg style="left:61.05px;top:539px" width="8" height="12"><path d="M1.200 1.500l5.200 4.500-5.200 4.500z" fill="none" stroke="#1e1e1e" stroke-width="1.300" stroke-linejoin="miter"/></svg>
<svg style="left:81.35px;top:535px" width="23" height="24" viewBox="0 0 23 24"><path d="M0.900 8.400L13.800 1.300 20.300 7.400 7.100 13.800z" fill="#cbdbef"/><path d="M0.900 8.400L7.100 13.800V21.400L0.900 14.900z" fill="#e4eaf3"/><path d="M7.100 13.800L20.300 7.400V13.800L7.100 21.400z" fill="#e4eaf3"/><path d="M0.900 8.400L13.800 1.300 20.300 7.400V13.800L7.100 21.400 0.900 14.900zM0.900 8.400L7.100 13.800 20.300 7.400M7.100 13.800V21.400" fill="none" stroke="#1762be" stroke-width="1.4" stroke-linejoin="round"/></svg>
<div class="ui t" style="left:108.35px;top:533px;color:#1e1e1e;letter-spacing:-0.626px">[0]</div>
<div class="ui t" style="left:430.3px;top:533px;color:#1e1e1e;letter-spacing:-0.397px">{v2rayN.Mode.Outbounds4Ray}</div>
<div class="ui t" style="left:1029.3px;top:533px;color:#1e1e1e;letter-spacing:-0.322px">v2rayN.Mode.Outbou...</div>
<svg style="left:61.05px;top:565px" width="8" height="12"><path d="M1.200 1.500l5.200 4.500-5.200 4.500z" fill="none" stroke="#1e1e1e" stroke-width="1.300" stroke-linejoin="miter"/></svg>
<svg style="left:81.35px;top:561px" width="23" height="24" viewBox="0 0 23 24"><path d="M0.900 8.400L13.800 1.300 20.300 7.400 7.100 13.800z" fill="#cbdbef"/><path d="M0.900 8.400L7.100 13.800V21.400L0.900 14.900z" fill="#e4eaf3"/><path d="M7.100 13.800L20.300 7.400V13.800L7.100 21.400z" fill="#e4eaf3"/><path d="M0.900 8.400L13.800 1.300 20.300 7.400V13.800L7.100 21.400 0.900 14.900zM0.900 8.400L7.100 13.800 20.300 7.400M7.100 13.800V21.400" fill="none" stroke="#1762be" stroke-width="1.4" stroke-linejoin="round"/></svg>
<div class="ui t" style="left:108.35px;top:559px;color:#1e1e1e;letter-spacing:-0.626px">[1]</div>
<div class="ui t" style="left:430.3px;top:559px;color:#1e1e1e;letter-spacing:-0.397px">{v2rayN.Mode.Outbounds4Ray}</div>
<div class="ui t" style="left:1029.3px;top:559px;color:#1e1e1e;letter-spacing:-0.322px">v2rayN.Mode.Outbou...</div>
<svg style="left:61.05px;top:591px" width="8" height="12"><path d="M1.200 1.500l5.200 4.500-5.200 4.500z" fill="none" stroke="#1e1e1e" stroke-width="1.300" stroke-linejoin="miter"/></svg>
<svg style="left:81.35px;top:587px" width="23" height="24" viewBox="0 0 23 24"><path d="M0.900 8.400L13.800 1.300 20.300 7.400 7.100 13.800z" fill="#cbdbef"/><path d="M0.900 8.400L7.100 13.800V21.400L0.900 14.900z" fill="#e4eaf3"/><path d="M7.100 13.800L20.300 7.400V13.800L7.100 21.400z" fill="#e4eaf3"/><path d="M0.900 8.400L13.800 1.300 20.300 7.400V13.800L7.100 21.400 0.900 14.900zM0.900 8.400L7.100 13.800 20.300 7.400M7.100 13.800V21.400" fill="none" stroke="#1762be" stroke-width="1.4" stroke-linejoin="round"/></svg>
<div class="ui t" style="left:108.35px;top:585px;color:#1e1e1e;letter-spacing:-0.626px">[2]</div>
<div class="ui t" style="left:430.3px;top:585px;color:#1e1e1e;letter-spacing:-0.397px">{v2rayN.Mode.Outbounds4Ray}</div>
<div class="ui t" style="left:1029.3px;top:585px;color:#1e1e1e;letter-spacing:-0.322px">v2rayN.Mode.Outbou...</div>
<svg style="left:61.05px;top:617.5px" width="9" height="9"><path d="M8.300 0.500v7.800H0.500z" fill="#1e1e1e"/></svg>
<svg style="left:81.35px;top:613px" width="23" height="24" viewBox="0 0 23 24"><path d="M0.900 8.400L13.800 1.300 20.300 7.400 7.100 13.800z" fill="#cbdbef"/><path d="M0.900 8.400L7.100 13.800V21.400L0.900 14.900z" fill="#e4eaf3"/><path d="M7.100 13.800L20.300 7.400V13.800L7.100 21.400z" fill="#e4eaf3"/><path d="M0.900 8.400L13.800 1.300 20.300 7.400V13.800L7.100 21.400 0.900 14.900zM0.900 8.400L7.100 13.800 20.300 7.400M7.100 13.800V21.400" fill="none" stroke="#1762be" stroke-width="1.4" stroke-linejoin="round"/></svg>
<div class="ui t" style="left:108.35px;top:611px;color:#1e1e1e;letter-spacing:-0.626px">[3]</div>
<div class="ui t" style="left:430.3px;top:611px;color:#1e1e1e;letter-spacing:-0.397px">{v2rayN.Mode.Outbounds4Ray}</div>
<div class="ui t" style="left:1029.3px;top:611px;color:#1e1e1e;letter-spacing:-0.322px">v2rayN.Mode.Outbou...</div>

<svg style="left:106.9px;top:638.7px" width="23" height="23" viewBox="0 0 23 23"><path d="M12.300 9.600L3.300 18.600" stroke="#262626" stroke-width="3.500" stroke-linecap="round"/><path d="M11.800 10.100L3.400 18.500" stroke="#f2f2f2" stroke-width="1.500" stroke-linecap="round"/><path d="M19.300 6.200A3.900 3.900 0 1 1 15.800 2.700" fill="none" stroke="#262626" stroke-width="4.300"/></svg>
<div class="ui t" style="left:134.4px;top:637px;color:#1e1e1e;letter-spacing:-0.551px">mux</div>
<div class="ui t" style="left:430.3px;top:637px;color:#1e1e1e;letter-spacing:-0.378px">null</div>
<div class="ui t" style="left:1029.3px;top:637px;color:#1e1e1e;letter-spacing:-0.51px">v2rayN.Mode.Mux4Ray</div>

<svg style="left:106.9px;top:664.7px" width="23" height="23" viewBox="0 0 23 23"><path d="M12.300 9.600L3.300 18.600" stroke="#262626" stroke-width="3.500" stroke-linecap="round"/><path d="M11.800 10.100L3.400 18.500" stroke="#f2f2f2" stroke-width="1.500" stroke-linecap="round"/><path d="M19.300 6.200A3.900 3.900 0 1 1 15.800 2.700" fill="none" stroke="#262626" stroke-width="4.300"/></svg>
<div class="ui t" style="left:134.4px;top:663px;color:#1e1e1e;letter-spacing:0.171px">protocol</div>
<div class="ui t" style="left:430.3px;top:663px;color:#1e1e1e;letter-spacing:-0.448px">&quot;socks&quot;</div>
<div class="ui t" style="left:1029.3px;top:663px;color:#1e1e1e;letter-spacing:-0.242px">string</div>
<svg style="left:942px;top:665px" width="22" height="22" viewBox="0 0 22 22"><circle cx="9.100" cy="8.700" r="6.600" fill="#dedede" stroke="#2b2b2b" stroke-width="1.300"/><path d="M13.900 13.600l6.300 6.300" stroke="#2b2b2b" stroke-width="1.600"/></svg><svg class="cj" style="left:963.5px;top:666.2px" width="36.4" height="18.3"><text x="0" y="16.1" font-size="18.1" fill="#1e1e1e">查看</text></svg><svg style="left:1007px;top:672px" width="13" height="7"><path d="M0.400 0.500h11.600l-5.800 5.500z" fill="#1e1e1e"/></svg>
<svg style="left:87.1px;top:695.5px" width="9" height="9"><path d="M8.300 0.500v7.800H0.500z" fill="#1e1e1e"/></svg>
<svg style="left:106.9px;top:690.7px" width="23" height="23" viewBox="0 0 23 23"><path d="M12.300 9.600L3.300 18.600" stroke="#262626" stroke-width="3.500" stroke-linecap="round"/><path d="M11.800 10.100L3.400 18.500" stroke="#f2f2f2" stroke-width="1.500" stroke-linecap="round"/><path d="M19.300 6.200A3.900 3.900 0 1 1 15.800 2.700" fill="none" stroke="#262626" stroke-width="4.300"/></svg>
<div class="ui t" style="left:134.4px;top:689px;color:#1e1e1e;letter-spacing:-0.358px">settings</div>
<div class="ui t" style="left:430.3px;top:689px;color:#1e1e1e;letter-spacing:-0.33px">{v2rayN.Mode.Outboundsettings4Ray}</div>
<div class="ui t" style="left:1029.3px;top:689px;color:#1e1e1e;letter-spacing:-0.322px">v2rayN.Mode.Outbou...</div>

<svg style="left:132.95px;top:716.7px" width="23" height="23" viewBox="0 0 23 23"><path d="M12.300 9.600L3.300 18.600" stroke="#262626" stroke-width="3.500" stroke-linecap="round"/><path d="M11.800 10.100L3.400 18.500" stroke="#f2f2f2" stroke-width="1.500" stroke-linecap="round"/><path d="M19.300 6.200A3.900 3.900 0 1 1 15.800 2.700" fill="none" stroke="#262626" stroke-width="4.300"/></svg>
<div class="ui t" style="left:160.45px;top:715px;color:#1e1e1e;letter-spacing:-0.313px">domainStrategy</div>
<div class="ui t" style="left:430.3px;top:715px;color:#1e1e1e;letter-spacing:-0.378px">null</div>
<div class="ui t" style="left:1029.3px;top:715px;color:#1e1e1e;letter-spacing:-0.242px">string</div>

<svg style="left:132.95px;top:742.7px" width="23" height="23" viewBox="0 0 23 23"><path d="M12.300 9.600L3.300 18.600" stroke="#262626" stroke-width="3.500" stroke-linecap="round"/><path d="M11.800 10.100L3.400 18.500" stroke="#f2f2f2" stroke-width="1.500" stroke-linecap="round"/><path d="M19.300 6.200A3.900 3.900 0 1 1 15.800 2.700" fill="none" stroke="#262626" stroke-width="4.300"/></svg>
<div class="ui t" style="left:160.45px;top:741px;color:#1e1e1e;letter-spacing:-0.689px">response</div>
<div class="ui t" style="left:430.3px;top:741px;color:#1e1e1e;letter-spacing:-0.378px">null</div>
<div class="ui t" style="left:1029.3px;top:741px;color:#1e1e1e;letter-spacing:-0.632px">v2rayN.Mode.Respons...</div>
<svg style="left:113.15px;top:773.5px" width="9" height="9"><path d="M8.300 0.500v7.800H0.500z" fill="#1e1e1e"/></svg>
<svg style="left:132.95px;top:768.7px" width="23" height="23" viewBox="0 0 23 23"><path d="M12.300 9.600L3.300 18.600" stroke="#262626" stroke-width="3.500" stroke-linecap="round"/><path d="M11.800 10.100L3.400 18.500" stroke="#f2f2f2" stroke-width="1.500" stroke-linecap="round"/><path d="M19.300 6.200A3.900 3.900 0 1 1 15.800 2.700" fill="none" stroke="#262626" stroke-width="4.300"/></svg>
<div class="ui t" style="left:160.45px;top:767px;color:#1e1e1e;letter-spacing:-1.008px">servers</div>
<div class="ui t" style="left:430.3px;top:767px;color:#1e1e1e;letter-spacing:-0.239px">Count = 1</div>
<div class="ui t" style="left:1029.3px;top:767px;color:#1e1e1e;letter-spacing:-0.77px">System.Collections.Gen...</div>
<svg style="left:942px;top:769px" width="22" height="22" viewBox="0 0 22 22"><circle cx="9.100" cy="8.700" r="6.600" fill="#dedede" stroke="#2b2b2b" stroke-width="1.300"/><path d="M13.900 13.600l6.300 6.300" stroke="#2b2b2b" stroke-width="1.600"/></svg><svg class="cj" style="left:963.5px;top:770.2px" width="36.4" height="18.3"><text x="0" y="16.1" font-size="18.1" fill="#1e1e1e">查看</text></svg><svg style="left:1007px;top:776px" width="13" height="7"><path d="M0.400 0.500h11.600l-5.800 5.500z" fill="#1e1e1e"/></svg>
<svg style="left:139.2px;top:799.5px" width="9" height="9"><path d="M8.300 0.500v7.800H0.500z" fill="#1e1e1e"/></svg>
<svg style="left:159.5px;top:795px" width="23" height="24" viewBox="0 0 23 24"><path d="M0.900 8.400L13.800 1.300 20.300 7.400 7.100 13.800z" fill="rgba(30,20,80,.22)"/><path d="M0.900 8.400L7.100 13.800V21.400L0.900 14.900z" fill="rgba(0,0,0,0)"/><path d="M7.100 13.800L20.300 7.400V13.800L7.100 21.400z" fill="rgba(0,0,0,0)"/><path d="M0.900 8.400L13.800 1.300 20.300 7.400V13.800L7.100 21.400 0.900 14.900zM0.900 8.400L7.100 13.800 20.300 7.400M7.100 13.800V21.400" fill="none" stroke="#141414" stroke-width="1.7" stroke-linejoin="round"/></svg>
<div class="ui t" style="left:186.5px;top:793px;color:#fff;letter-spacing:-0.626px">[0]</div>
<div class="ui t" style="left:430.3px;top:793px;color:#fff;letter-spacing:-0.604px">{v2rayN.Mode.ServersItem4Ray}</div>
<div class="ui t" style="left:1029.3px;top:793px;color:#fff;letter-spacing:-0.596px">v2rayN.Mode.ServersIt...</div>

<svg style="left:185.05px;top:820.7px" width="23" height="23" viewBox="0 0 23 23"><path d="M12.300 9.600L3.300 18.600" stroke="#262626" stroke-width="3.500" stroke-linecap="round"/><path d="M11.800 10.100L3.400 18.500" stroke="#f2f2f2" stroke-width="1.500" stroke-linecap="round"/><path d="M19.300 6.200A3.900 3.900 0 1 1 15.800 2.700" fill="none" stroke="#262626" stroke-width="4.300"/></svg>
<div class="ui t" style="left:212.55px;top:819px;color:#1e1e1e;letter-spacing:-0.733px">address</div>
<div class="ui t" style="left:430.3px;top:819px;color:#1e1e1e;letter-spacing:-0.427px">&quot;127.0.0.1&quot;</div>
<div class="ui t" style="left:1029.3px;top:819px;color:#1e1e1e;letter-spacing:-0.242px">string</div>
<svg style="left:942px;top:821px" width="22" height="22" viewBox="0 0 22 22"><circle cx="9.100" cy="8.700" r="6.600" fill="#dedede" stroke="#2b2b2b" stroke-width="1.300"/><path d="M13.900 13.600l6.300 6.300" stroke="#2b2b2b" stroke-width="1.600"/></svg><svg class="cj" style="left:963.5px;top:822.2px" width="36.4" height="18.3"><text x="0" y="16.1" font-size="18.1" fill="#1e1e1e">查看</text></svg><svg style="left:1007px;top:828px" width="13" height="7"><path d="M0.400 0.500h11.600l-5.800 5.500z" fill="#1e1e1e"/></svg>

<svg style="left:185.05px;top:846.7px" width="23" height="23" viewBox="0 0 23 23"><path d="M12.300 9.600L3.300 18.600" stroke="#262626" stroke-width="3.500" stroke-linecap="round"/><path d="M11.800 10.100L3.400 18.500" stroke="#f2f2f2" stroke-width="1.500" stroke-linecap="round"/><path d="M19.300 6.200A3.900 3.900 0 1 1 15.800 2.700" fill="none" stroke="#262626" stroke-width="4.300"/></svg>
<div class="ui t" style="left:212.55px;top:845px;color:#1e1e1e;letter-spacing:-0.704px">email</div>
<div class="ui t" style="left:430.3px;top:845px;color:#1e1e1e;letter-spacing:-0.378px">null</div>
<div class="ui t" style="left:1029.3px;top:845px;color:#1e1e1e;letter-spacing:-0.242px">string</div>

<svg style="left:185.05px;top:872.7px" width="23" height="23" viewBox="0 0 23 23"><path d="M12.300 9.600L3.300 18.600" stroke="#262626" stroke-width="3.500" stroke-linecap="round"/><path d="M11.800 10.100L3.400 18.500" stroke="#f2f2f2" stroke-width="1.500" stroke-linecap="round"/><path d="M19.300 6.200A3.900 3.900 0 1 1 15.800 2.700" fill="none" stroke="#262626" stroke-width="4.300"/></svg>
<div class="ui t" style="left:212.55px;top:871px;color:#1e1e1e;letter-spacing:0.098px">flow</div>
<div class="ui t" style="left:430.3px;top:871px;color:#1e1e1e;letter-spacing:-0.378px">null</div>
<div class="ui t" style="left:1029.3px;top:871px;color:#1e1e1e;letter-spacing:-0.242px">string</div>

<svg style="left:185.05px;top:898.7px" width="23" height="23" viewBox="0 0 23 23"><path d="M12.300 9.600L3.300 18.600" stroke="#262626" stroke-width="3.500" stroke-linecap="round"/><path d="M11.800 10.100L3.400 18.500" stroke="#f2f2f2" stroke-width="1.500" stroke-linecap="round"/><path d="M19.300 6.200A3.900 3.900 0 1 1 15.800 2.700" fill="none" stroke="#262626" stroke-width="4.300"/></svg>
<div class="ui t" style="left:212.55px;top:897px;color:#1e1e1e;letter-spacing:-0.812px">level</div>
<div class="ui t" style="left:430.3px;top:897px;color:#1e1e1e;letter-spacing:-1.297px">0</div>
<div class="ui t" style="left:1029.3px;top:897px;color:#1e1e1e;letter-spacing:0.084px">int</div>

<svg style="left:185.05px;top:924.7px" width="23" height="23" viewBox="0 0 23 23"><path d="M12.300 9.600L3.300 18.600" stroke="#262626" stroke-width="3.500" stroke-linecap="round"/><path d="M11.800 10.100L3.400 18.500" stroke="#f2f2f2" stroke-width="1.500" stroke-linecap="round"/><path d="M19.300 6.200A3.900 3.900 0 1 1 15.800 2.700" fill="none" stroke="#262626" stroke-width="4.300"/></svg>
<div class="ui t" style="left:212.55px;top:923px;color:#1e1e1e;letter-spacing:-0.214px">@method</div>
<div class="ui t" style="left:430.3px;top:923px;color:#1e1e1e;letter-spacing:-0.378px">null</div>
<div class="ui t" style="left:1029.3px;top:923px;color:#1e1e1e;letter-spacing:-0.242px">string</div>

<svg style="left:185.05px;top:950.7px" width="23" height="23" viewBox="0 0 23 23"><path d="M12.300 9.600L3.300 18.600" stroke="#262626" stroke-width="3.500" stroke-linecap="round"/><path d="M11.800 10.100L3.400 18.500" stroke="#f2f2f2" stroke-width="1.500" stroke-linecap="round"/><path d="M19.300 6.200A3.900 3.900 0 1 1 15.800 2.700" fill="none" stroke="#262626" stroke-width="4.300"/></svg>
<div class="ui t" style="left:212.55px;top:949px;color:#1e1e1e;letter-spacing:-0.24px">ota</div>
<div class="ui t" style="left:430.3px;top:949px;color:#1e1e1e;letter-spacing:-0.756px">false</div>
<div class="ui t" style="left:1029.3px;top:949px;color:#1e1e1e;letter-spacing:0.379px">bool</div>

<svg style="left:185.05px;top:976.7px" width="23" height="23" viewBox="0 0 23 23"><path d="M12.300 9.600L3.300 18.600" stroke="#262626" stroke-width="3.500" stroke-linecap="round"/><path d="M11.800 10.100L3.400 18.500" stroke="#f2f2f2" stroke-width="1.500" stroke-linecap="round"/><path d="M19.300 6.200A3.900 3.900 0 1 1 15.800 2.700" fill="none" stroke="#262626" stroke-width="4.300"/></svg>
<div class="ui t" style="left:212.55px;top:975px;color:#1e1e1e;letter-spacing:-0.448px">password</div>
<div class="ui t" style="left:430.3px;top:975px;color:#1e1e1e;letter-spacing:-0.378px">null</div>
<div class="ui t" style="left:1029.3px;top:975px;color:#1e1e1e;letter-spacing:-0.242px">string</div>

<svg style="left:185.05px;top:1002.7px" width="23" height="23" viewBox="0 0 23 23"><path d="M12.300 9.600L3.300 18.600" stroke="#262626" stroke-width="3.500" stroke-linecap="round"/><path d="M11.800 10.100L3.400 18.500" stroke="#f2f2f2" stroke-width="1.500" stroke-linecap="round"/><path d="M19.300 6.200A3.900 3.900 0 1 1 15.800 2.700" fill="none" stroke="#262626" stroke-width="4.300"/></svg>
<div class="ui t" style="left:212.55px;top:1001px;color:#1e1e1e;letter-spacing:0.352px">port</div>
<div class="ui t" style="left:430.3px;top:1001px;color:#1e1e1e;letter-spacing:-0.351px">10086</div>
<div class="ui t" style="left:1029.3px;top:1001px;color:#1e1e1e;letter-spacing:0.084px">int</div>
<svg style="left:165.25px;top:1033px" width="8" height="12"><path d="M1.200 1.500l5.200 4.500-5.200 4.500z" fill="none" stroke="#1e1e1e" stroke-width="1.300" stroke-linejoin="miter"/></svg>
<svg style="left:185.05px;top:1028.7px" width="23" height="23" viewBox="0 0 23 23"><path d="M12.300 9.600L3.300 18.600" stroke="#262626" stroke-width="3.500" stroke-linecap="round"/><path d="M11.800 10.100L3.400 18.500" stroke="#f2f2f2" stroke-width="1.500" stroke-linecap="round"/><path d="M19.300 6.200A3.900 3.900 0 1 1 15.800 2.700" fill="none" stroke="#262626" stroke-width="4.300"/></svg>
<div class="ui t" style="left:212.55px;top:1027px;color:#1e1e1e;letter-spacing:-1.11px">users</div>
<div class="ui t" style="left:430.3px;top:1027px;color:#1e1e1e;letter-spacing:-0.378px">null</div>
<div class="ui t" style="left:1029.3px;top:1027px;color:#1e1e1e;letter-spacing:-0.77px">System.Collections.Gen...</div>
<svg style="left:139.2px;top:1059px" width="8" height="12"><path d="M1.200 1.500l5.200 4.500-5.200 4.500z" fill="none" stroke="#1e1e1e" stroke-width="1.300" stroke-linejoin="miter"/></svg>
<svg style="left:159.5px;top:1055px" width="23" height="24" viewBox="0 0 23 24"><path d="M0.900 8.400L13.800 1.300 20.300 7.400 7.100 13.800z" fill="#cbdbef"/><path d="M0.900 8.400L7.100 13.800V21.400L0.900 14.900z" fill="#e4eaf3"/><path d="M7.100 13.800L20.300 7.400V13.800L7.100 21.400z" fill="#e4eaf3"/><path d="M0.900 8.400L13.800 1.300 20.300 7.400V13.800L7.100 21.400 0.900 14.900zM0.900 8.400L7.100 13.800 20.300 7.400M7.100 13.800V21.400" fill="none" stroke="#1762be" stroke-width="1.4" stroke-linejoin="round"/></svg>
<svg class="cj" style="left:185.7px;top:1055.8px" width="76.4" height="19.4"><text x="0" y="17.1" font-size="19" fill="#1e1e1e">原始视图</text></svg>

<svg style="left:132.95px;top:1080.7px" width="23" height="23" viewBox="0 0 23 23"><path d="M12.300 9.600L3.300 18.600" stroke="#262626" stroke-width="3.500" stroke-linecap="round"/><path d="M11.800 10.100L3.400 18.500" stroke="#f2f2f2" stroke-width="1.500" stroke-linecap="round"/><path d="M19.300 6.200A3.900 3.900 0 1 1 15.800 2.700" fill="none" stroke="#262626" stroke-width="4.300"/></svg>
<div class="ui t" style="left:160.45px;top:1079px;color:#1e1e1e;letter-spacing:-1.024px">userLevel</div>
<div class="ui t" style="left:430.3px;top:1079px;color:#1e1e1e;letter-spacing:-0.378px">null</div>
<div class="ui t" style="left:1029.3px;top:1079px;color:#1e1e1e;letter-spacing:-0.682px">int?</div>
<svg style="left:113.15px;top:1111px" width="8" height="12"><path d="M1.200 1.500l5.200 4.500-5.200 4.500z" fill="none" stroke="#1e1e1e" stroke-width="1.300" stroke-linejoin="miter"/></svg>
<svg style="left:132.95px;top:1106.7px" width="23" height="23" viewBox="0 0 23 23"><path d="M12.300 9.600L3.300 18.600" stroke="#262626" stroke-width="3.500" stroke-linecap="round"/><path d="M11.800 10.100L3.400 18.500" stroke="#f2f2f2" stroke-width="1.500" stroke-linecap="round"/><path d="M19.300 6.200A3.900 3.900 0 1 1 15.800 2.700" fill="none" stroke="#262626" stroke-width="4.300"/></svg>
<div class="ui t" style="left:160.45px;top:1105px;color:#1e1e1e;letter-spacing:-0.644px">vnext</div>
<div class="ui t" style="left:430.3px;top:1105px;color:#1e1e1e;letter-spacing:-0.378px">null</div>
<div class="ui t" style="left:1029.3px;top:1105px;color:#1e1e1e;letter-spacing:-0.77px">System.Collections.Gen...</div>

<svg style="left:106.9px;top:1132.7px" width="23" height="23" viewBox="0 0 23 23"><path d="M12.300 9.600L3.300 18.600" stroke="#262626" stroke-width="3.500" stroke-linecap="round"/><path d="M11.800 10.100L3.400 18.500" stroke="#f2f2f2" stroke-width="1.500" stroke-linecap="round"/><path d="M19.300 6.200A3.900 3.900 0 1 1 15.800 2.700" fill="none" stroke="#262626" stroke-width="4.300"/></svg>
<div class="ui t" style="left:134.4px;top:1131px;color:#1e1e1e;letter-spacing:-0.456px">streamSettings</div>
<div class="ui t" style="left:430.3px;top:1131px;color:#1e1e1e;letter-spacing:-0.378px">null</div>
<div class="ui t" style="left:1029.3px;top:1131px;color:#1e1e1e;letter-spacing:-0.688px">v2rayN.Mode.StreamS...</div>

<svg style="left:106.9px;top:1158.7px" width="23" height="23" viewBox="0 0 23 23"><path d="M12.300 9.600L3.300 18.600" stroke="#262626" stroke-width="3.500" stroke-linecap="round"/><path d="M11.800 10.100L3.400 18.500" stroke="#f2f2f2" stroke-width="1.500" stroke-linecap="round"/><path d="M19.300 6.200A3.900 3.900 0 1 1 15.800 2.700" fill="none" stroke="#262626" stroke-width="4.300"/></svg>
<div class="ui t" style="left:134.4px;top:1157px;color:#1e1e1e;letter-spacing:-0.24px">tag</div>
<div class="ui t" style="left:430.3px;top:1157px;color:#1e1e1e;letter-spacing:-0.156px">&quot;tunnel&quot;</div>
<div class="ui t" style="left:1029.3px;top:1157px;color:#1e1e1e;letter-spacing:-0.242px">string</div>
<svg style="left:942px;top:1159px" width="22" height="22" viewBox="0 0 22 22"><circle cx="9.100" cy="8.700" r="6.600" fill="#dedede" stroke="#2b2b2b" stroke-width="1.300"/><path d="M13.900 13.600l6.300 6.300" stroke="#2b2b2b" stroke-width="1.600"/></svg><svg class="cj" style="left:963.5px;top:1160.2px" width="36.4" height="18.3"><text x="0" y="16.1" font-size="18.1" fill="#1e1e1e">查看</text></svg><svg style="left:1007px;top:1166px" width="13" height="7"><path d="M0.400 0.500h11.600l-5.800 5.500z" fill="#1e1e1e"/></svg>
<svg style="left:61.05px;top:1189px" width="8" height="12"><path d="M1.200 1.500l5.200 4.500-5.200 4.500z" fill="none" stroke="#1e1e1e" stroke-width="1.300" stroke-linejoin="miter"/></svg>
<svg style="left:81.35px;top:1185px" width="23" height="24" viewBox="0 0 23 24"><path d="M0.900 8.400L13.800 1.300 20.300 7.400 7.100 13.800z" fill="#cbdbef"/><path d="M0.900 8.400L7.100 13.800V21.400L0.900 14.900z" fill="#e4eaf3"/><path d="M7.100 13.800L20.300 7.400V13.800L7.100 21.400z" fill="#e4eaf3"/><path d="M0.900 8.400L13.800 1.300 20.300 7.400V13.800L7.100 21.400 0.900 14.900zM0.900 8.400L7.100 13.800 20.300 7.400M7.100 13.800V21.400" fill="none" stroke="#1762be" stroke-width="1.4" stroke-linejoin="round"/></svg>
<svg class="cj" style="left:107.55px;top:1185.8px" width="76.4" height="19.4"><text x="0" y="17.1" font-size="19" fill="#1e1e1e">原始视图</text></svg>
<svg style="left:55.3px;top:1211px" width="23" height="24" viewBox="0 0 23 24"><path d="M0.900 8.400L13.800 1.300 20.300 7.400 7.100 13.800z" fill="#cbdbef"/><path d="M0.900 8.400L7.100 13.800V21.400L0.900 14.900z" fill="#e4eaf3"/><path d="M7.100 13.800L20.300 7.400V13.800L7.100 21.400z" fill="#e4eaf3"/><path d="M0.900 8.400L13.800 1.300 20.300 7.400V13.800L7.100 21.400 0.900 14.900zM0.900 8.400L7.100 13.800 20.300 7.400M7.100 13.800V21.400" fill="none" stroke="#1762be" stroke-width="1.4" stroke-linejoin="round"/></svg>
<div class="ui t" style="left:82.3px;top:1209px;color:#1e1e1e">v2rayConfig.routing</div>
<div class="ui t" style="left:430.3px;top:1209px;color:#1e1e1e">{v2rayN.Mode.Routing4Ray}</div>
<div class="ui t" style="left:1029.3px;top:1209px;color:#1e1e1e">v2rayN.Mode.Routing...</div>
<svg style="left:942px;top:1211px" width="22" height="22" viewBox="0 0 22 22"><circle cx="9.100" cy="8.700" r="6.600" fill="#dedede" stroke="#2b2b2b" stroke-width="1.300"/><path d="M13.900 13.600l6.300 6.300" stroke="#2b2b2b" stroke-width="1.600"/></svg><svg class="cj" style="left:963.5px;top:1212.2px" width="36.4" height="18.3"><text x="0" y="16.1" font-size="18.1" fill="#1e1e1e">查看</text></svg><svg style="left:1007px;top:1218px" width="13" height="7"><path d="M0.400 0.500h11.600l-5.800 5.500z" fill="#1e1e1e"/></svg>
<div style="left:24.800px;top:614px;width:811.800px;height:574.400px;box-sizing:border-box;border:3.300px solid #ff0000;border-radius:7px;background:rgba(255,0,0,.2)"></div>
</div></body></html>
